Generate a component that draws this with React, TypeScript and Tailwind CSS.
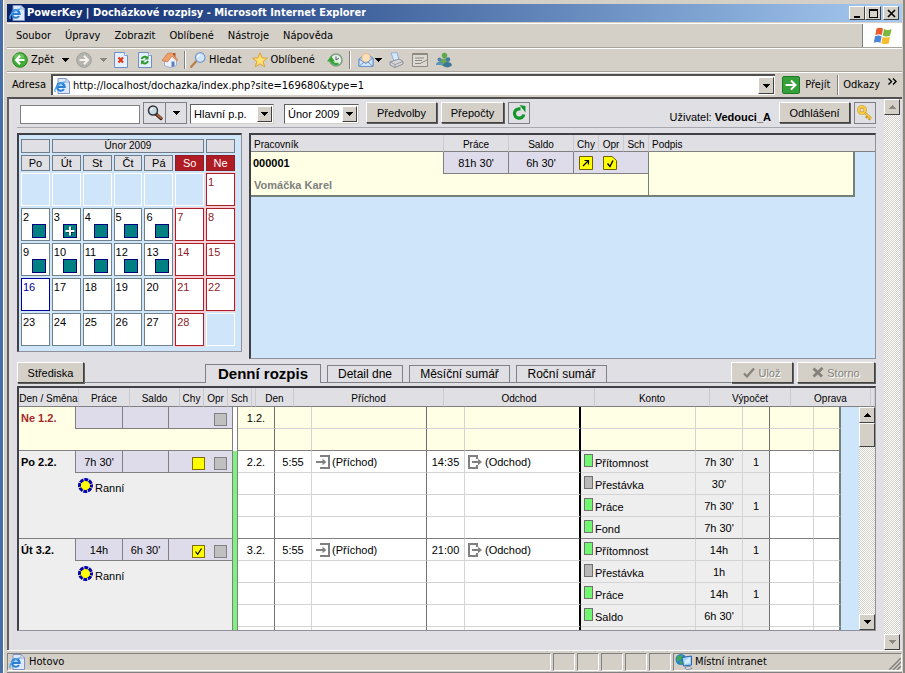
import type { ReactNode } from 'react';
import clsx from 'clsx';

const RAISED = 'border border-t-white border-l-white border-r-[#404040] border-b-[#404040] bg-[#d4d0c8]';
const DITHER = 'bg-[repeating-conic-gradient(#ffffff_0_25%,#d4d0c8_0_50%)] bg-[length:2px_2px]';

function Arrow({ up, dim }: { up?: boolean; dim?: boolean }) {
  return (
    <svg width="7" height="4" viewBox="0 0 7 4" shapeRendering="crispEdges" className="shrink-0">
      <path d={up ? 'M3 0h1v1h1v1h1v1h1v1H0V3h1V2h1V1h1z' : 'M0 0h7v1H6v1H5v1H4v1H3V3H2V2H1V1H0z'} fill={dim ? '#8a8780' : '#000'} />
    </svg>
  );
}

function IeIcon() {
  return (
    <svg width="16" height="16" viewBox="0 0 16 16" className="shrink-0">
      <path d="M4 .5h8l3.500 3.500v11.500H4z" fill="#dfe9fb" stroke="#7d95c8" />
      <path d="M12 .5V4h3.500z" fill="#fff" stroke="#7d95c8" strokeWidth=".8" />
      <circle cx="6.800" cy="8.800" r="4" fill="#eaf4ff" />
      <path d="M10 11a3.800 3.800 0 1 1 .6-2.200H4" fill="none" stroke="#2a7fd2" strokeWidth="2.200" />
      <path d="M1.500 14C-1.500 11.500 6 3.500 11.500 4.200" fill="none" stroke="#4fa4ea" strokeWidth="1.300" />
    </svg>
  );
}

function BackIcon() {
  return (
    <svg width="16" height="16" viewBox="0 0 16 16">
      <circle cx="8" cy="8" r="7.300" fill="#3fae35" stroke="#2a8222" />
      <ellipse cx="7" cy="4.500" rx="5" ry="3" fill="#8ad67d" opacity=".6" />
      <path d="M8 3.800 4 8l4 4.200M4.500 8H12.500" fill="none" stroke="#fff" strokeWidth="2.200" />
    </svg>
  );
}

function ForwardIcon() {
  return (
    <svg width="16" height="16" viewBox="0 0 16 16">
      <circle cx="8" cy="8" r="7.300" fill="#b5b3ae" stroke="#a09e99" />
      <path d="M8 3.800 12 8l-4 4.200M11.500 8H3.500" fill="none" stroke="#f3f2ef" strokeWidth="2" />
    </svg>
  );
}

function StopIcon() {
  return (
    <svg width="14" height="16" viewBox="0 0 14 16">
      <path d="M.5.500h10l3 3v12H.5z" fill="#e6effd" stroke="#6f8fc8" />
      <path d="M10.500.5v3h3" fill="#fff" stroke="#6f8fc8" strokeWidth=".8" />
      <path d="m4.500 5.500 4.500 5M9 5.500l-4.500 5" stroke="#e03a1b" strokeWidth="2.200" />
    </svg>
  );
}

function PageRefreshIcon() {
  return (
    <svg width="14" height="16" viewBox="0 0 14 16">
      <path d="M.5.500h10l3 3v12H.5z" fill="#e6effd" stroke="#6f8fc8" />
      <path d="M10.500.5v3h3" fill="#fff" stroke="#6f8fc8" strokeWidth=".8" />
      <path d="M3.500 7a3.500 3 0 0 1 5.500-1.500M10 9a3.500 3 0 0 1-5.500 1.800" fill="none" stroke="#2b9c2b" strokeWidth="2" />
      <path d="M10.500 3.500v4h-4zM3 12.500v-4h4z" fill="#2b9c2b" />
    </svg>
  );
}

function HomeIcon() {
  return (
    <svg width="16" height="16" viewBox="0 0 16 16">
      <path d="M11 1h2.500v5H11z" fill="#b5562a" />
      <path d="M2.500 8v5.500L8 15.500l6.500-2V8L10 3.500z" fill="#eef3ff" stroke="#8fa3cc" strokeWidth=".8" />
      <path d="M0 8.500 5.500 1.500 9.500.8l6.300 7-1.300 1L10 4.200 5.500 10z" fill="#eda06a" stroke="#b96a35" strokeWidth=".6" />
      <path d="M9.500 9.500h3v4.800l-3 .8z" fill="#5b7fc4" />
    </svg>
  );
}

function SearchIcon() {
  return (
    <svg width="16" height="16" viewBox="0 0 16 16">
      <path d="m1.200 14.800 5.300-5.800" stroke="#b9824a" strokeWidth="2.400" strokeLinecap="round" />
      <circle cx="10.200" cy="5.500" r="4.800" fill="#cfe6fb" stroke="#7797c6" strokeWidth="1.200" />
      <path d="M7.500 5A3 3 0 0 1 10 2.700" stroke="#fff" fill="none" strokeWidth="1.300" />
    </svg>
  );
}

function StarIcon() {
  return (
    <svg width="16" height="16" viewBox="0 0 16 16">
      <path d="m8 .8 2 5 5.400.3-4.200 3.400 1.500 5.300L8 11.800l-4.700 3 1.500-5.300L.6 6.100 6 5.800z" fill="#ffe070" stroke="#dba035" />
    </svg>
  );
}

function HistoryIcon() {
  return (
    <svg width="16" height="16" viewBox="0 0 16 16">
      <circle cx="9" cy="8" r="6" fill="#e4f2e4" stroke="#7fa08a" strokeWidth="1.600" />
      <path d="M9 4.500V8l3-2" fill="none" stroke="#557" />
      <path d="M11.500 11.500A5.500 5.500 0 0 1 4 8.500" fill="none" stroke="#34a534" strokeWidth="2.300" />
      <path d="M0 9.500 4 4l4 5.500z" fill="#34a534" />
    </svg>
  );
}

function MailIcon() {
  return (
    <svg width="16" height="16" viewBox="0 0 16 16">
      <path d="M1 7 8 1.500 15 6v8.500H1z" fill="#b5d3f3" stroke="#6b93c6" />
      <path d="M4 3.500 8 1l4 2.500V10H4z" fill="#ffe0b8" stroke="#e2ad73" strokeWidth=".7" />
      <path d="m1 7 7 4.500L15 6v8.500H1z" fill="#cfe4fa" stroke="#6b93c6" />
      <path d="m1 14.500 5-4.500M15 14.500 10 10" stroke="#6b93c6" />
    </svg>
  );
}

function PrintIcon() {
  return (
    <svg width="16" height="16" viewBox="0 0 16 16">
      <path d="m3 1 6-.5L11 8l-5 1z" fill="#d4e7ff" stroke="#83a3cf" strokeWidth=".8" />
      <path d="m2 10 9-3 4 2.500V12l-8 3.500L2 13z" fill="#d5d5da" stroke="#7c8088" strokeWidth=".8" />
      <path d="m2 10 5 2.500 8-3M7 12.500v3" fill="none" stroke="#8d9096" strokeWidth=".8" />
    </svg>
  );
}

function EditIcon() {
  return (
    <svg width="16" height="16" viewBox="0 0 16 16">
      <path d="M.5 1.500h15v13H.5z" fill="#dddad4" stroke="#8d8a84" />
      <path d="M0 2.500h16M3 6h9M3 8.500h7M3 11.500h6M9 11l6-3" stroke="#8d8a84" />
    </svg>
  );
}

function MessengerIcon() {
  return (
    <svg width="16" height="16" viewBox="0 0 16 16">
      <circle cx="8.500" cy="3.500" r="2.700" fill="#5fa74b" />
      <path d="M3 9c2-3 8-4 10-1l-2 6H6z" fill="#6fa856" />
      <circle cx="3.500" cy="7.500" r="2" fill="#4c82ae" />
      <path d="M0 12c1-3 6-3 7 0l-1 1H0z" fill="#5b94bb" />
      <circle cx="12" cy="7.500" r="2.200" fill="#3f7ba5" />
      <path d="M7 14c0-5 8-5 9-1-2 3-6 3-9 1z" fill="#3b7797" />
    </svg>
  );
}

function WindowsLogo() {
  return (
    <svg width="20" height="18" viewBox="0 0 20 18">
      <path d="M3.500 1.500C6 .2 8 .5 10 1.500L8.800 8C6.800 7 4.700 7 2.300 8.200z" fill="#ea5a2c" />
      <path d="M11 2c2.500 1.200 5 1.200 7.500 0l-1.300 6.500c-2.500 1.200-5 1.200-7.400 0z" fill="#7cb83e" />
      <path d="M2 9.300C4.500 8 6.600 8.200 8.600 9.200l-1.200 6.500C5.400 14.700 3 14.700.8 15.800z" fill="#4a86d8" />
      <path d="M9.600 9.700c2.500 1.200 5 1.200 7.400 0l-1.200 6.500c-2.500 1.200-5 1.200-7.400 0z" fill="#f8bd2c" />
    </svg>
  );
}

function IntranetIcon() {
  return (
    <svg width="18" height="16" viewBox="0 0 18 16">
      <circle cx="6" cy="5.500" r="5.500" fill="#2f7fd0" />
      <path d="M2 3c2-2.500 6-2.500 6 0S4 6 1.500 8zM5 7c2 0 4 1 3 3.500H5.500z" fill="#3fae4a" />
      <path d="m7 3.500 9.500-1.500v9L8.500 12z" fill="#9ed2f8" stroke="#2a62b0" />
      <path d="m9.500 7 5.500-4v6l-5 1z" fill="#d5eefe" />
      <path d="m10 13.200 5-.7 2 2-5.500 1.200z" fill="#e2e6ee" stroke="#717b90" strokeWidth=".8" />
    </svg>
  );
}

function LoupeIcon() {
  return (
    <svg width="16" height="16" viewBox="0 0 16 16">
      <path d="m9 9 5 4.500" stroke="#2a1a12" strokeWidth="3.200" strokeLinecap="round" />
      <path d="m10.500 10 3.500 3" stroke="#b06038" strokeWidth="2.200" strokeLinecap="round" />
      <circle cx="6" cy="5.500" r="4.500" fill="#c6d8e2" stroke="#30353c" strokeWidth="1.500" />
      <path d="M3.800 5.500A2.300 2.300 0 0 1 6 3.300" fill="none" stroke="#fff" strokeWidth="1.200" />
    </svg>
  );
}

function ReloadIcon() {
  return (
    <svg width="16" height="16" viewBox="0 0 16 16">
      <path d="M9.500 3.800H8.300A4.700 4.700 0 1 0 12.800 9.500" fill="none" stroke="#12962b" strokeWidth="3.200" />
      <path d="M8.500 0 14.500 1v6.500z" fill="#12962b" />
    </svg>
  );
}

function KeyIcon() {
  return (
    <svg width="16" height="16" viewBox="0 0 16 16">
      <path d="m7 7 7 6.500M11 10.500 9 13M13.500 12.500 12 15" stroke="#c99a25" strokeWidth="2.400" />
      <path d="m7 7 7 6.500" stroke="#f7ce46" strokeWidth="1.400" />
      <circle cx="5" cy="5" r="3.200" fill="none" stroke="#c99a25" strokeWidth="3.200" />
      <circle cx="5" cy="5" r="3.200" fill="none" stroke="#f7ce46" strokeWidth="2" />
    </svg>
  );
}

function ShiftIcon() {
  return (
    <svg width="15" height="15" viewBox="0 0 15 15" className="shrink-0">
      <circle cx="7.500" cy="7.500" r="5.500" fill="#ffff00" />
      <circle cx="7.500" cy="7.500" r="6" fill="none" stroke="#0000b8" strokeWidth="3" strokeDasharray="3.900 .812" strokeDashoffset="1.950" />
    </svg>
  );
}

function InIcon() {
  return (
    <svg width="14" height="14" viewBox="0 0 14 14" className="shrink-0">
      <path d="M4 1h9v12H4M0 7h9" fill="none" stroke="#808080" strokeWidth="2" />
      <path d="M6.500 3.800 10.500 7l-4 3.200z" fill="#808080" />
    </svg>
  );
}

function OutIcon() {
  return (
    <svg width="14" height="14" viewBox="0 0 14 14" className="shrink-0">
      <path d="M9 4V1H1v12h8v-3M4 7h8" fill="none" stroke="#808080" strokeWidth="2" />
      <path d="M10 3.800 14 7l-4 3.200z" fill="#808080" />
    </svg>
  );
}

function ToolButton({ label, children, text }: { label: string; children: ReactNode; text?: boolean }) {
  return (
    <button type="button" aria-label={label} className="flex shrink-0 items-center gap-[3px]">
      {children}
      {text && <span>{label}</span>}
    </button>
  );
}

function ClassicButton({ children, className }: { children: ReactNode; className?: string }) {
  return (
    <button type="button" className={clsx(RAISED, 'flex h-[21px] shrink-0 items-center justify-center shadow-[1px_1px_0_#606060]', className)}>
      {children}
    </button>
  );
}

function Picker({ label, value, className }: { label: string; value: string; className: string }) {
  return (
    <div className={clsx('relative mt-px h-[20px] shrink-0 border border-b-[#d4d0c8] border-r-[#d4d0c8] border-l-[#606060] border-t-[#606060] bg-white', className)}>
      <select aria-label={label} className="h-full w-full appearance-none bg-transparent pl-[3px] text-[11px]">
        <option>{value}</option>
      </select>
      <span className={clsx(RAISED, 'pointer-events-none absolute inset-y-px right-px flex w-[15px] items-center justify-center')}>
        <Arrow />
      </span>
    </div>
  );
}

const calendar: (number | null)[][] = [
  [null, null, null, null, null, null, 1],
  [2, 3, 4, 5, 6, 7, 8],
  [9, 10, 11, 12, 13, 14, 15],
  [16, 17, 18, 19, 20, 21, 22],
  [23, 24, 25, 26, 27, 28, null],
];

function dayColors(day: number, weekend: boolean) {
  if (weekend) return 'border-[#a8202c] text-[#8c1c28] shadow-[0_0_0_1px_#f8cdd2]';
  if (day === 16) return 'border-[#0000a0] text-[#0000a0]';
  return 'border-[#6f8088]';
}

function CalendarDay({ day, weekend }: { day: number | null; weekend: boolean }) {
  if (day === null) return <td className="h-[33px] border border-white" />;
  const worked = !weekend && day < 14;
  return (
    <td className={clsx('h-[33px] border bg-white p-0 align-top text-[11px] leading-3', dayColors(day, weekend))}>
      <div className="flex h-[31px] flex-col justify-between pt-[2px] pl-px">
        {day}
        {worked && (
          <span className="mr-[3px] mb-[2px] flex h-[14px] w-[14px] items-center justify-center self-end border border-[#000080] bg-[#008080]">
            {day === 3 && (
              <svg width="10" height="10" viewBox="0 0 10 10">
                <path d="M5.500 1.500v8M1.500 5.500h8" stroke="#000" strokeWidth="2" />
                <path d="M5 .5v9M.5 5h9" stroke="#fff" strokeWidth="2" />
              </svg>
            )}
          </span>
        )}
      </div>
    </td>
  );
}

function Calendar() {
  return (
    <div className="h-[219px] w-[225px] shrink-0 border-t-2 border-r border-b border-l-2 border-t-[#404048] border-r-[#90909c] border-b-[#90909c] border-l-[#404048] bg-[#cfe6fa] pt-[2px]">
      <table className="w-[218px] table-fixed border-separate border-spacing-[2px]">
        <thead className="text-[11px] leading-3">
          <tr>
            <td className="h-[14px] border border-[#707c88] bg-[#e0dfe3] p-0" />
            <th colSpan={5} className="h-[14px] border border-[#707c88] bg-[#e0dfe3] p-0 text-[10px] font-normal">
              Únor 2009
            </th>
            <td className="h-[14px] border border-[#707c88] bg-[#e0dfe3] p-0" />
          </tr>
          <tr>
            {['Po', 'Út', 'St', 'Čt', 'Pá', 'So', 'Ne'].map((name, i) => (
              <th
                key={name}
                className={clsx('h-[16px] border p-0 font-normal', i > 4 ? 'border-[#8c1c28] bg-[#b01c24] text-white' : 'border-[#707c88] bg-[#e0dfe3]')}
              >
                {name}
              </th>
            ))}
          </tr>
        </thead>
        <tbody>
          {calendar.map((week, w) => (
            <tr key={w}>
              {week.map((day, i) => (
                <CalendarDay key={i} day={day} weekend={i > 4} />
              ))}
            </tr>
          ))}
        </tbody>
      </table>
    </div>
  );
}

function Workers() {
  const head = 'border-b border-[#808080] p-0 align-bottom leading-3 font-normal';
  const value = 'border-b border-l border-[#808080] bg-[#dedcea] p-0 text-center';
  return (
    <div className="min-w-0 flex-1 border-t-2 border-r border-b border-l-2 border-t-[#404048] border-r-[#90909c] border-b-[#90909c] border-l-[#404048] bg-[#cfe6fa]">
      <table className="w-full table-fixed border-separate border-spacing-0 text-[11px] leading-4">
        <colgroup>
          <col className="w-[192px]" />
          <col className="w-[65px]" />
          <col className="w-[65px]" />
          <col className="w-[25px]" />
          <col className="w-[25px]" />
          <col className="w-[25px]" />
          <col />
          <col className="w-[20px]" />
        </colgroup>
        <thead className="bg-[#e0dfe3] text-[10px]">
          <tr className="h-[17px]">
            <th className={clsx(head, 'pl-[3px] text-left')}>Pracovník</th>
            <th className={clsx(head, 'border-l border-l-[#cbcad0]')}>Práce</th>
            <th className={clsx(head, 'border-l border-l-[#cbcad0]')}>Saldo</th>
            <th className={clsx(head, 'border-l border-l-[#cbcad0]')}>Chy</th>
            <th className={clsx(head, 'border-l border-l-[#cbcad0]')}>Opr</th>
            <th className={clsx(head, 'border-l border-l-[#cbcad0]')}>Sch</th>
            <th colSpan={2} className={clsx(head, 'border-l border-l-[#cbcad0] pl-[3px] text-left')}>Podpis</th>
          </tr>
        </thead>
        <tbody className="bg-[#ffffe6]">
          <tr className="h-[22px]">
            <td className="p-0 pl-[2px] font-bold">000001</td>
            <td className={value}>81h 30'</td>
            <td className={value}>6h 30'</td>
            <td className={value}>
              <svg width="14" height="14" viewBox="0 0 14 14" className="ml-[5px]">
                <path d="M.5.500h13v13H.5z" fill="#ffff00" stroke="#706000" />
                <path d="m4 10 5.500-5.500M5.500 4.500H9.500v4" fill="none" stroke="#000" strokeWidth="1.200" />
              </svg>
            </td>
            <td className="border-b border-[#808080] bg-[#dedcea] p-0">
              <svg width="14" height="14" viewBox="0 0 14 14" className="ml-[5px]">
                <path d="M.5.500h8.500l4.500 4v9H.5z" fill="#ffff00" stroke="#706000" />
                <path d="m4.500 7.500 2.500 3 3-6" fill="none" stroke="#000" strokeWidth="1.400" />
              </svg>
            </td>
            <td className="border-b border-[#808080] bg-[#dedcea] p-0" />
            <td rowSpan={2} className="border-r-2 border-b-2 border-l border-[#748078] p-0" />
            <td rowSpan={2} className="bg-[#cfe6fa] p-0" />
          </tr>
          <tr className="h-[23px]">
            <td colSpan={6} className="border-b-2 border-[#748078] p-0 pl-[3px] font-bold text-[#808080]">
              Vomáčka Karel
            </td>
          </tr>
        </tbody>
      </table>
    </div>
  );
}

interface Account {
  name: string;
  time: string;
  count?: string;
  idle?: boolean;
}

interface Day {
  label: string;
  date: string;
  work?: string;
  balance?: string;
  flag?: 'open' | 'checked';
  arrival?: string;
  departure?: string;
  weekend?: boolean;
  rows: (Account | null)[];
}

const days: Day[] = [
  { label: 'Ne 1.2.', date: '1.2.', weekend: true, rows: [null, null] },
  {
    label: 'Po 2.2.',
    date: '2.2.',
    work: "7h 30'",
    flag: 'open',
    arrival: '5:55',
    departure: '14:35',
    rows: [
      { name: 'Přítomnost', time: "7h 30'", count: '1' },
      { name: 'Přestávka', time: "30'", idle: true },
      { name: 'Práce', time: "7h 30'", count: '1' },
      { name: 'Fond', time: "7h 30'" },
    ],
  },
  {
    label: 'Út 3.2.',
    date: '3.2.',
    work: '14h',
    balance: "6h 30'",
    flag: 'checked',
    arrival: '5:55',
    departure: '21:00',
    rows: [
      { name: 'Přítomnost', time: '14h', count: '1' },
      { name: 'Přestávka', time: '1h', idle: true },
      { name: 'Práce', time: '14h', count: '1' },
      { name: 'Saldo', time: "6h 30'" },
      null,
    ],
  },
];

function DaySummary({ day }: { day: Day }) {
  return (
    <div className="flex flex-col">
      <div className="flex h-[22px]">
        <div className={clsx('w-[56px] shrink-0 pt-[3px] pl-[2px] font-bold', day.weekend && 'text-[#a82828]')}>{day.label}</div>
        <div className="flex flex-1 border-b border-[#808080] bg-[#dedcea]">
          <div className="flex w-[47px] items-center justify-center border-l border-[#808080]">{day.work}</div>
          <div className="flex w-[46px] items-center justify-center border-l border-[#808080]">{day.balance}</div>
          <div className="flex flex-1 items-center justify-end gap-[9px] border-l border-[#808080] pt-[3px] pr-[5px]">
            {day.flag && (
              <span className="flex h-[13px] w-[13px] items-center justify-center border border-[#807000] bg-[#ffff00]">
                {day.flag === 'checked' && (
                  <svg width="9" height="9" viewBox="0 0 9 9">
                    <path d="m1.500 4.500 2.200 2.800L7.500 1.500" fill="none" stroke="#000" strokeWidth="1.200" />
                  </svg>
                )}
              </span>
            )}
            <span className="h-[13px] w-[13px] border border-[#808080] bg-[#c0c0c0]" />
          </div>
        </div>
      </div>
      {day.work && (
        <div className="flex h-[24px] items-center gap-[2px] pl-[59px]">
          <ShiftIcon />
          <span className="pt-[5px]">Ranní</span>
        </div>
      )}
    </div>
  );
}

function DayRows({ day }: { day: Day }) {
  const paper = day.weekend ? 'bg-[#ffffe6]' : 'bg-white';
  const shade = day.weekend ? 'bg-[#ffffe6]' : 'bg-[#eeeeee]';
  return (
    <>
      {day.rows.map((row, i) => {
        const line = i === day.rows.length - 1 ? 'border-b-[#808080]' : 'border-b-[#d4d4d4]';
        const light = clsx('border-r border-b border-r-[#d4d4d4] p-0 text-center', line);
        const dark = clsx('border-r border-b border-r-[#707070] p-0', line);
        return (
          <tr key={i} className="h-[22px]">
            {i === 0 && (
              <>
                <td rowSpan={day.rows.length} className={clsx('border-r border-b border-[#808080] p-0 align-top', shade)}>
                  <DaySummary day={day} />
                </td>
                <td rowSpan={day.rows.length} className={clsx('border-r border-[#808080] p-0', day.weekend ? 'bg-white' : 'bg-[#80f080]')} />
              </>
            )}
            <td className={clsx(dark, paper, 'text-center')}>{i === 0 && day.date}</td>
            <td className={clsx(light, paper)}>{i === 0 && day.arrival}</td>
            <td className={clsx(dark, paper)}>
              {i === 0 && day.arrival && (
                <span className="flex items-center gap-[2px] pl-1">
                  <InIcon />
                  (Příchod)
                </span>
              )}
            </td>
            <td className={clsx(light, paper)}>{i === 0 && day.departure}</td>
            <td className={clsx('border-r-2 border-b border-r-black p-0', line, paper)}>
              {i === 0 && day.departure && (
                <span className="flex items-center gap-[3px] pl-[3px]">
                  <OutIcon />
                  (Odchod)
                </span>
              )}
            </td>
            <td className={clsx('border-r border-b border-r-[#d4d4d4] p-0', line, shade)}>
              {row && (
                <span className="flex h-[21px] gap-[2px] pl-[3px]">
                  <span className={clsx('mt-[3px] h-[13px] w-[9px] shrink-0 border border-[#707070]', row.idle ? 'bg-[#b8b8b8]' : 'bg-[#70f870]')} />
                  <span className="pt-1">{row.name}</span>
                </span>
              )}
            </td>
            <td className={clsx(light, shade)}>{row?.time}</td>
            <td className={clsx(dark, shade, 'text-center')}>{row?.count}</td>
            <td className={clsx(light, paper)} />
            <td className={clsx('border-r-2 border-b border-r-[#748078] p-0', line, paper)} />
          </tr>
        );
      })}
    </>
  );
}

const headings = ['Den / Směna', 'Práce', 'Saldo', 'Chy', 'Opr', 'Sch', '', 'Den', 'Příchod', 'Odchod', 'Konto', 'Výpočet', 'Oprava', ''];

function DailySchedule() {
  return (
    <div className="mt-[3px] flex min-h-0 flex-1 flex-col border-t-2 border-r border-b border-l-2 border-t-[#404048] border-r-[#90909c] border-b-[#90909c] border-l-[#404048] bg-[#cfe6fa]">
      <table className="w-full shrink-0 table-fixed border-separate border-spacing-0 bg-[#e0dfe3] text-[10px] leading-3">
        <colgroup>
          <col className="w-[60px]" />
          <col className="w-[51px]" />
          <col className="w-[50px]" />
          <col className="w-[24px]" />
          <col className="w-[24px]" />
          <col className="w-[24px]" />
          <col className="w-[4px]" />
          <col className="w-[38px]" />
          <col className="w-[150px]" />
          <col className="w-[151px]" />
          <col />
          <col className="w-[81px]" />
          <col className="w-[80px]" />
          <col className="w-[4px]" />
        </colgroup>
        <thead>
          <tr className="h-[19px]">
            {headings.map((heading, i) => (
              <th key={i} className="border-r border-b border-r-[#cbcad0] border-b-[#808080] p-0 pb-px align-bottom font-normal whitespace-nowrap">
                {heading}
              </th>
            ))}
          </tr>
        </thead>
      </table>
      <div className="flex min-h-0 flex-1">
        <div className="min-w-0 flex-1 overflow-hidden pr-[18px]">
          <table className="w-full table-fixed border-separate border-spacing-0 text-[11px] leading-4">
            <colgroup>
              <col className="w-[214px]" />
              <col className="w-[5px]" />
              <col className="w-[37px]" />
              <col className="w-[37px]" />
              <col className="w-[115px]" />
              <col className="w-[38px]" />
              <col className="w-[116px]" />
              <col />
              <col className="w-[47px]" />
              <col className="w-[27px]" />
              <col className="w-[44px]" />
              <col className="w-[27px]" />
            </colgroup>
            <tbody>
              {days.map((day) => (
                <DayRows key={day.label} day={day} />
              ))}
            </tbody>
          </table>
        </div>
        <div className={clsx('flex w-[16px] shrink-0 flex-col', DITHER)}>
          <button type="button" aria-label="Nahoru" className={clsx(RAISED, 'flex h-[16px] items-center justify-center')}>
            <Arrow up />
          </button>
          <div className={clsx(RAISED, 'h-[24px]')} />
          <button type="button" aria-label="Dolů" className={clsx(RAISED, 'mt-auto flex h-[16px] items-center justify-center')}>
            <Arrow />
          </button>
        </div>
      </div>
    </div>
  );
}

function Tabs() {
  const gap = 'self-stretch border-b border-[#808088]';
  const tab = 'h-[18px] shrink-0 border border-[#808088] text-[12px] leading-4';
  return (
    <div className="mt-[3px] flex h-[21px] shrink-0 items-end">
      <ClassicButton className="w-[67px]">Střediska</ClassicButton>
      <div className={clsx(gap, 'w-[121px] shrink-0')} />
      <button type="button" className="h-[19px] w-[116px] shrink-0 border border-b-0 border-[#808088] text-[15px] leading-[18px] font-bold">
        Denní rozpis
      </button>
      <div className={clsx(gap, 'w-[6px]')} />
      <button type="button" className={clsx(tab, 'w-[76px]')}>Detail dne</button>
      <div className={clsx(gap, 'w-[6px]')} />
      <button type="button" className={clsx(tab, 'w-[101px]')}>Měsíční sumář</button>
      <div className={clsx(gap, 'w-[6px]')} />
      <button type="button" className={clsx(tab, 'w-[91px]')}>Roční sumář</button>
      <div className={clsx(gap, 'flex-1')} />
      <ClassicButton className="w-[62px] gap-[3px] text-[#85827c] [text-shadow:1px_1px_0_#fff]">
        <svg width="12" height="10" viewBox="0 0 12 10">
          <path d="m1 5.500 3 3 7-8" fill="none" stroke="#85827c" strokeWidth="2.200" />
        </svg>
        Ulož
      </ClassicButton>
      <ClassicButton className="mr-px ml-1 w-[78px] gap-[3px] text-[#85827c] [text-shadow:1px_1px_0_#fff]">
        <svg width="12" height="11" viewBox="0 0 12 11">
          <path d="m1.500 1.500 8.500 8M10.500 1 1.500 9.500" fill="none" stroke="#85827c" strokeWidth="3" />
        </svg>
        Storno
      </ClassicButton>
    </div>
  );
}

function PageToolbar() {
  return (
    <div className="flex h-[29px] shrink-0 items-start border-b border-[#a8a8b0] pt-[3px] pl-[3px]">
      <input aria-label="Hledat pracovníka" className="mt-[3px] h-[19px] w-[120px] border border-[#808080] bg-white px-1 text-[11px]" />
      <div className="ml-[3px] flex h-[22px] shrink-0 border border-[#808088]">
        <button type="button" aria-label="Hledat" className="flex w-[22px] items-center justify-center border-r border-[#808088]">
          <LoupeIcon />
        </button>
        <button type="button" aria-label="Možnosti hledání" className="flex w-[20px] items-center justify-center">
          <Arrow />
        </button>
      </div>
      <div className="mt-px flex gap-[10px]">
        <Picker label="Pracovní poměr" value="Hlavní p.p." className="ml-[3px] w-[84px]" />
        <Picker label="Měsíc" value="Únor 2009" className="w-[75px]" />
      </div>
      <ClassicButton className="ml-[7px] w-[71px]">Předvolby</ClassicButton>
      <ClassicButton className="ml-1 w-[63px]">Přepočty</ClassicButton>
      <button type="button" aria-label="Obnovit" className="ml-1 flex h-[22px] w-[22px] shrink-0 items-center justify-center border border-[#808088]">
        <ReloadIcon />
      </button>
      <p className="mt-[7px] mr-2 ml-auto text-[11px] leading-4">
        Uživatel: <b>Vedouci_A</b>
      </p>
      <ClassicButton className="w-[71px]">Odhlášení</ClassicButton>
      <button type="button" aria-label="Změna hesla" className="ml-1 flex h-[22px] w-[22px] shrink-0 items-center justify-center border border-[#808088]">
        <KeyIcon />
      </button>
    </div>
  );
}

function TitleBar() {
  const control = 'flex h-[14px] w-[16px] items-center justify-center';
  return (
    <header className="flex h-[18px] shrink-0 items-center bg-linear-to-r from-[#0a246a] to-[#a6caf0] pr-[3px] pl-[2px]">
      <IeIcon />
      <h1 className="ml-[2px] truncate text-[11px] leading-4 font-bold text-white">PowerKey | Docházkové rozpisy - Microsoft Internet Explorer</h1>
      <div className="ml-auto flex shrink-0">
        <button type="button" aria-label="Minimalizovat" className={clsx(RAISED, control)}>
          <svg width="9" height="9" viewBox="0 0 9 9"><path d="M1 7h6v2H1z" /></svg>
        </button>
        <button type="button" aria-label="Maximalizovat" className={clsx(RAISED, control)}>
          <svg width="9" height="9" viewBox="0 0 9 9"><path d="M0 0h9v9H0zM1 2v6h7V2z" fillRule="evenodd" /></svg>
        </button>
        <button type="button" aria-label="Zavřít" className={clsx(RAISED, control, 'ml-[2px]')}>
          <svg width="9" height="9" viewBox="0 0 9 9"><path d="m1 1 7 7M8 1 1 8" stroke="#000" strokeWidth="1.600" /></svg>
        </button>
      </div>
    </header>
  );
}

function MenuBar() {
  return (
    <div className="mt-px flex h-[25px] shrink-0 items-center border-t border-b border-t-white border-b-[#a8a49c] pl-[9px]">
      <nav className="flex gap-[14px]">
        {['Soubor', 'Úpravy', 'Zobrazit', 'Oblíbené', 'Nástroje', 'Nápověda'].map((item) => (
          <button key={item} type="button">{item}</button>
        ))}
      </nav>
      <div className="ml-auto flex h-full w-[40px] items-center justify-center border-l border-[#808080] bg-white">
        <WindowsLogo />
      </div>
    </div>
  );
}

function BrowserToolbar() {
  const rule = 'h-[18px] w-[2px] shrink-0 border-r border-l border-r-white border-l-[#808080]';
  return (
    <div className="flex h-[24px] shrink-0 items-center border-t border-b border-t-white border-b-[#a8a49c] pl-[5px]">
      <ToolButton label="Zpět" text><BackIcon /></ToolButton>
      <button type="button" aria-label="Historie zpět" className="ml-2"><Arrow /></button>
      <div className="ml-[7px] flex items-center">
        <ToolButton label="Vpřed"><ForwardIcon /></ToolButton>
        <button type="button" aria-label="Historie vpřed" className="ml-2"><Arrow dim /></button>
      </div>
      <div className="ml-[7px] flex items-center gap-[10px]">
        <ToolButton label="Zastavit"><StopIcon /></ToolButton>
        <ToolButton label="Aktualizovat"><PageRefreshIcon /></ToolButton>
        <ToolButton label="Domů"><HomeIcon /></ToolButton>
      </div>
      <div className={clsx(rule, 'mr-1 ml-[6px]')} />
      <ToolButton label="Hledat" text><SearchIcon /></ToolButton>
      <div className="ml-[10px] flex items-center gap-[12px]">
        <ToolButton label="Oblíbené" text><StarIcon /></ToolButton>
        <ToolButton label="Historie"><HistoryIcon /></ToolButton>
      </div>
      <div className={clsx(rule, 'mr-[7px] ml-[6px]')} />
      <ToolButton label="Pošta"><MailIcon /></ToolButton>
      <button type="button" aria-label="Možnosti pošty" className="ml-px"><Arrow /></button>
      <div className="ml-[6px] flex items-center gap-[8px]">
        <ToolButton label="Tisk"><PrintIcon /></ToolButton>
        <ToolButton label="Upravit"><EditIcon /></ToolButton>
        <ToolButton label="Messenger"><MessengerIcon /></ToolButton>
      </div>
    </div>
  );
}

function AddressBar() {
  return (
    <div className="flex h-[24px] shrink-0 items-center border-t border-white pr-[5px] pl-[5px]">
      <label htmlFor="address" className="w-[39px] shrink-0">Adresa</label>
      <div className="flex h-[21px] min-w-0 flex-1 items-center border-t-2 border-l-2 border-[#505050] bg-white pl-px">
        <IeIcon />
        <input id="address" defaultValue="http://localhost/dochazka/index.php?site=169680&type=1" className="min-w-0 flex-1 bg-transparent pl-[3px] outline-none" />
        <button type="button" aria-label="Zobrazit adresy" className={clsx(RAISED, 'mr-px flex h-[17px] w-[16px] items-center justify-center')}>
          <Arrow />
        </button>
      </div>
      <button type="button" className="ml-[7px] flex shrink-0 items-center gap-[5px]">
        <svg width="18" height="18" viewBox="0 0 18 18">
          <rect x=".5" y=".5" width="17" height="17" rx="1.500" fill="#35a03a" stroke="#1f7a28" />
          <path d="M9 4.500 13.500 9 9 13.500M13 9H3.500" fill="none" stroke="#fff" strokeWidth="2" />
        </svg>
        Přejít
      </button>
      <div className="ml-[7px] h-[20px] w-[2px] border-r border-l border-r-white border-l-[#808080]" />
      <button type="button" className="ml-1 shrink-0">Odkazy</button>
      <button type="button" aria-label="Další odkazy" className="ml-2 self-start">
        <svg width="9" height="7" viewBox="0 0 9 7" className="mt-[5px]">
          <path d="m.5.500 3 3-3 3M5 .5l3 3-3 3" fill="none" stroke="#000" strokeWidth="1.400" />
        </svg>
      </button>
    </div>
  );
}

function StatusBar() {
  const cell = 'h-[18px] border border-t-[#808080] border-l-[#808080] border-r-white border-b-white';
  return (
    <footer className="flex h-[23px] shrink-0 items-center gap-[2px] border-t border-b border-t-white border-b-[#808080]">
      <div className={clsx(cell, 'flex flex-1 items-center gap-1 pl-px')}>
        <IeIcon />
        Hotovo
      </div>
      {[1, 2, 3, 4, 5].map((n) => (
        <div key={n} className={clsx(cell, 'w-[22px] shrink-0')} />
      ))}
      <div className={clsx(cell, 'flex w-[229px] shrink-0 items-center gap-[2px] pl-px')}>
        <IntranetIcon />
        Místní intranet
        <svg width="12" height="12" viewBox="0 0 12 12" className="ml-auto self-end">
          <path d="M0 12 12 0M4 12l8-8M8 12l4-4" stroke="#808080" strokeWidth="1.500" />
        </svg>
      </div>
    </footer>
  );
}

export default function App() {
  return (
    <div className="flex h-screen min-h-[480px] overflow-hidden border-l-[3px] border-[#466fa8] bg-[#d4d0c8] font-['DejaVu_Sans_Condensed','Noto_Sans',sans-serif] text-[11px] leading-4 text-black">
      <div className="flex min-w-0 flex-1 flex-col border-l border-white border-r-2 border-r-[#8a8780] pt-1 pr-px pl-[3px]">
        <TitleBar />
        <MenuBar />
        <BrowserToolbar />
        <AddressBar />
        <div className="mt-px flex min-h-0 flex-1 border-t-2 border-l-2 border-t-[#505050] border-l-[#606060] bg-[#e0dfe3]">
          <main className="flex min-w-0 flex-1 flex-col px-2 pb-[19px] font-['Liberation_Sans',Arial,sans-serif]">
            <PageToolbar />
            <div className="mt-[5px] flex h-[226px] shrink-0 gap-[7px]">
              <Calendar />
              <Workers />
            </div>
            <Tabs />
            <DailySchedule />
          </main>
          <div className={clsx('mr-[2px] flex w-[16px] shrink-0 flex-col justify-between', DITHER)}>
            <button type="button" aria-label="Posunout nahoru" disabled className={clsx(RAISED, 'flex h-[16px] items-center justify-center')}>
              <Arrow up dim />
            </button>
            <button type="button" aria-label="Posunout dolů" disabled className={clsx(RAISED, 'flex h-[16px] items-center justify-center')}>
              <Arrow dim />
            </button>
          </div>
        </div>
        <StatusBar />
      </div>
    </div>
  );
}
